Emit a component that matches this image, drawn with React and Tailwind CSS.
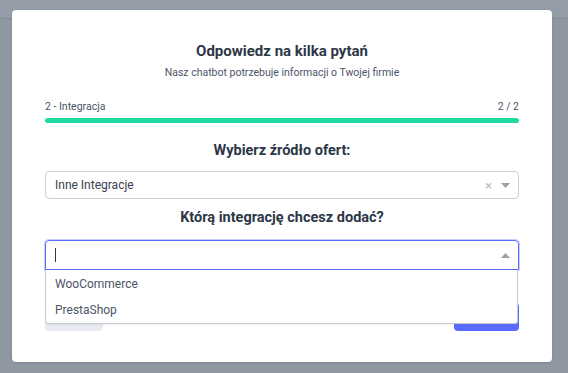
export default function App() {
  return (
    <div
      className="relative h-[373px] w-[568px] overflow-hidden bg-[#8f97a3]"
      style={{ fontFamily: "Roboto, 'Liberation Sans', sans-serif" }}
    >
      {/* dimmed page header behind overlay */}
      <div className="h-[19px] border-b border-[#848c98] bg-[#949ca8]" />

      {/* Modal */}
      <div className="absolute left-[12px] top-[10px] flex w-[540px] flex-col rounded-[4px] bg-white px-[33px] pb-[31px] pt-[31px] shadow-sm">
        <h2 className="text-center text-[15px] font-bold leading-[20px] text-[#2d3748]">
          Odpowiedz na kilka pytań
        </h2>
        <p className="mt-[5px] text-center text-[10.5px] leading-[14px] text-[#4a5568]">
          Nasz chatbot potrzebuje informacji o Twojej firmie
        </p>

        <div className="mt-[20px] flex items-center justify-between text-[10.5px] leading-[14px] text-[#4a5568]">
          <span>2 - Integracja</span>
          <span>2 / 2</span>
        </div>
        <div className="mt-[4px] h-[5px] rounded-full bg-[#1fd9a1]" />

        <h3 className="mt-[18px] text-center text-[14.5px] font-bold leading-[20px] text-[#2d3748]">
          Wybierz źródło ofert:
        </h3>
        <div className="mt-[10px] flex h-[28px] items-center rounded-[4px] border border-[#ccd1d9] pl-[9px] pr-[8px]">
          <span className="flex-1 text-[12px] text-[#3a4150]">Inne Integracje</span>
          <span className="mr-[9px] text-[13px] leading-none text-[#b6bcc5]">×</span>
          <svg width="9" height="5" viewBox="0 0 9 5" className="fill-[#9aa1ab]">
            <path d="M0 0h9L4.5 5z" />
          </svg>
        </div>

        <h3 className="mt-[9px] text-center text-[14.5px] font-bold leading-[20px] text-[#2d3748]">
          Którą integrację chcesz dodać?
        </h3>
        <div className="relative mt-[12px]">
          <div className="flex h-[30px] items-center rounded-t-[4px] border border-[#5b6cff] pl-[9px] pr-[8px] shadow-[0_0_0_1px_rgba(91,108,255,0.35)]">
            <span className="h-[14px] w-px bg-[#2d3748]" />
            <span className="flex-1" />
            <svg width="9" height="5" viewBox="0 0 9 5" className="fill-[#9aa1ab]">
              <path d="M0 5h9L4.5 0z" />
            </svg>
          </div>

          {/* open menu */}
          <div className="absolute left-0 right-[1px] top-[30px] z-10 rounded-b-[3px] border border-t-0 border-[#c6cbd3] bg-white text-[12px] text-[#4a5568] shadow-[0_1px_2px_rgba(0,0,0,0.06)]">
            <div className="flex h-[27px] items-center px-[9px]">WooCommerce</div>
            <div className="flex h-[26px] items-center px-[9px]">PrestaShop</div>
          </div>
        </div>

        <div className="mt-[33px] flex items-end justify-between">
          <button className="h-[28px] w-[58px] rounded-[4px] bg-[#e8ebef]" />
          <button className="h-[28px] w-[65px] rounded-[4px] bg-[#5a6cff]" />
        </div>
      </div>
    </div>
  );
}
